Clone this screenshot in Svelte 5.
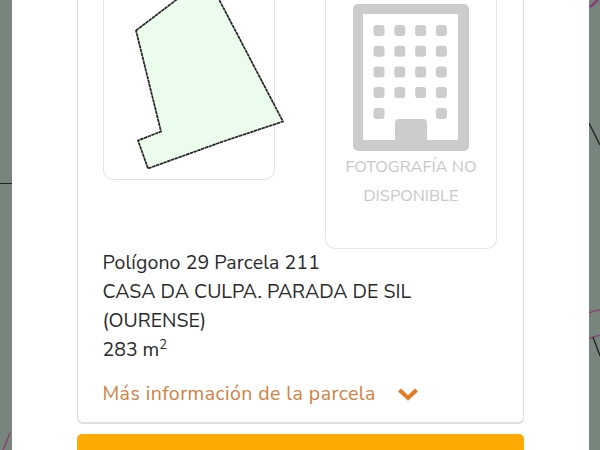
<script>
  const rows = [
    { key: "r1", cells: [0, 1, 2, 3] },
    { key: "r2", cells: [0, 1, 2, 3] },
    { key: "r3", cells: [0, 1, 2, 3] },
    { key: "r4", cells: [0, 1, 2, 3] },
  ];
</script>

<div class="screen">
  <svg class="map" width="12" height="450" viewBox="0 0 12 450">
    <path d="M0 183.500H12" stroke="#222" fill="none" />
    <path d="M3 450L10 433" stroke="#8a3f78" stroke-width="1.500" fill="none" />
  </svg>

  <div class="modal">
    <div class="card">
      <div class="photos">
        <div class="photo plot">
          <svg width="171" height="189" viewBox="0 0 171 189">
            <path
              d="M32 31.500L103 -22.500L179 122.500L119 142.500L44 169.500L34 141.500L57 132.500Z"
              fill="#ebfbec"
              stroke="#222"
              stroke-width="1.700"
              stroke-dasharray="3.500 .5"
            />
          </svg>
        </div>
        <div class="photo nophoto">
          <svg class="building" width="116" height="147" viewBox="0 0 116 147">
            <path
              fill="#ccc"
              fill-rule="evenodd"
              d="M5 0H111A5 5 0 0 1 116 5V142A5 5 0 0 1 111 147H5A5 5 0 0 1 0 142V5A5 5 0 0 1 5 0ZM10 10V136H42V119A4 4 0 0 1 46 115H70A4 4 0 0 1 74 119V136H105V10Z"
            />
            {#each rows as row, y (row.key)}
              {#each row.cells as x}
                <rect x={20.500 + x * 20.800} y={21 + y * 20.700} width="11" height="11" rx="3" fill="#ccc" />
              {/each}
            {/each}
            <rect x="20.500" y="104" width="11" height="11" rx="3" fill="#ccc" />
            <rect x="83" y="104" width="11" height="11" rx="3" fill="#ccc" />
          </svg>
          <p>FOTOGRAFÍA NO DISPONIBLE</p>
        </div>
      </div>

      <div class="info">
        <div class="title">Polígono 29 Parcela 211</div>
        <div>CASA DA CULPA. PARADA DE SIL (OURENSE)</div>
        <div>283 m<sup>2</sup></div>
      </div>

      <div class="more">
        <span>Más información de la parcela</span>
        <svg width="22" height="14" viewBox="0 0 22 14">
          <path d="M2.500 3L11 11L19.500 3" fill="none" stroke="#e57c25" stroke-width="4" />
        </svg>
      </div>
    </div>

    <div class="action"></div>
  </div>

  <svg class="map" width="11" height="450" viewBox="0 0 11 450">
    <path d="M1 7L9 0" stroke="#8a3f78" stroke-width="2.500" fill="none" />
    <path d="M0 123L11 145" stroke="#222" stroke-width="1.300" fill="none" />
    <path d="M0 313L5 311L11 310" stroke="#8a3f78" stroke-width="1.300" fill="none" />
    <path d="M0 339L4 337L11 335" stroke="#8a3f78" stroke-width="1.300" fill="none" />
    <path d="M4 337L11 356" stroke="#222" stroke-width="1.300" fill="none" />
  </svg>
</div>

<style>
  :global(body) {
    margin: 0;
    background: #fff;
  }

  .screen {
    display: flex;
    height: 450px;
    overflow: hidden;
    font-family: "Nunito Sans", Lato, sans-serif;
  }

  .map {
    flex: none;
    background: #78857c;
  }

  .modal {
    flex: 1;
    background: #fff;
    padding: 0 65px;
  }

  .card {
    box-sizing: border-box;
    height: 425px;
    margin-top: -1px;
    padding: 0 25px 0 24.500px;
    border: 1px solid #dedede;
    border-width: 0 1.500px 2px;
    border-radius: 0 0 6px 6px;
  }

  .photos {
    display: flex;
    justify-content: space-between;
    align-items: flex-start;
    height: 250px;
    margin: 0 1px 0 0;
  }

  .photo {
    box-sizing: border-box;
    width: 172px;
    border: 1px solid #e4e4e4;
    border-top: 0;
    border-radius: 0 0 10px 10px;
  }

  .plot {
    height: 181px;
  }

  .plot svg {
    display: block;
    overflow: visible;
  }

  .nophoto {
    height: 250px;
    text-align: center;
    padding-top: 5px;
  }

  .building {
    display: block;
    margin: 0 auto;
  }

  .nophoto p {
    margin: 0 auto;
    width: 140px;
    padding-top: 1px;
    font-size: 16.400px;
    line-height: 29px;
    color: #c8c8c8;
  }

  .info {
    margin-top: -1px;
    font-size: 19.500px;
    line-height: 29px;
    color: #2a2a2a;
  }

  .title {
    letter-spacing: 0.100px;
  }

  .info sup {
    font-size: 13px;
    line-height: 0;
  }

  .more {
    display: flex;
    align-items: center;
    gap: 21px;
    margin-top: 15px;
    font-size: 19.500px;
    letter-spacing: 0.450px;
    line-height: 29px;
    color: #d2803f;
  }

  .action {
    height: 30px;
    margin-top: 10px;
    background: #ffa905;
    border-radius: 5px 5px 0 0;
  }
</style>
